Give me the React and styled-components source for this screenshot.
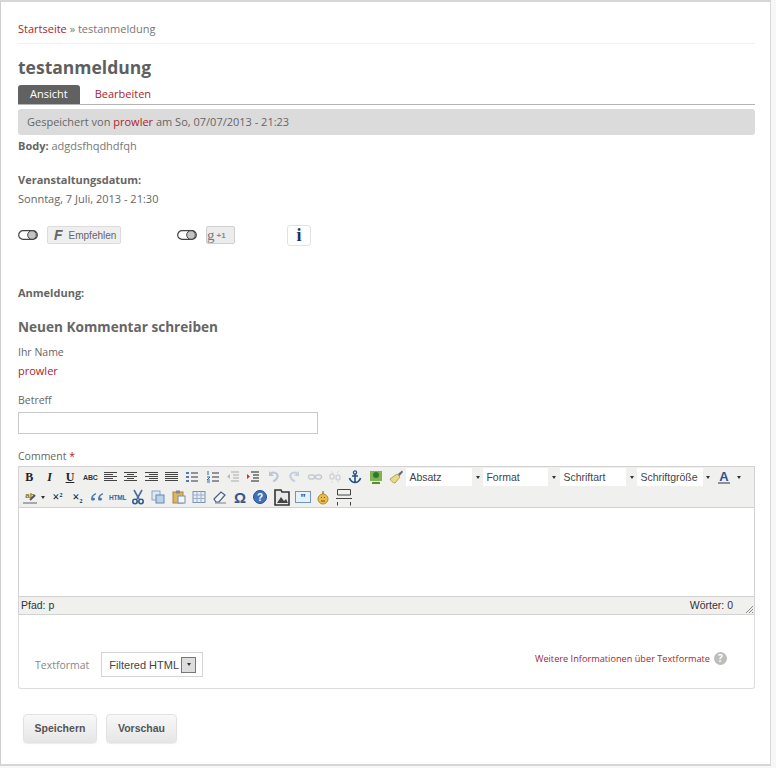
import styled, { createGlobalStyle } from 'styled-components'

const GlobalStyle = createGlobalStyle`
    html, body {
        margin: 0;
        padding: 0;
        background: #f7f7f7;
    }
    body {
        font-family: "Open Sans", "Liberation Sans", sans-serif;
        font-size: 11px;
        color: #666;
    }
`

const Panel = styled.div`
    box-sizing: border-box;
    width: 771px;
    height: 766px;
    padding: 0 15px 0 17px;
    background: #fff;
    border-top: 2px solid #d6d6d6;
    border-left: 1px solid #d0d0d0;
    border-right: 1px solid #d8d8d8;
    border-bottom: 2px solid #d6d6d6;
    overflow: hidden;
`

const Breadcrumb = styled.div`
    height: 42px;
    box-sizing: border-box;
    padding-top: 19px;
    line-height: 16px;
    border-bottom: 1px solid #f1f1f1;
    color: #777;
`

const Link = styled.a`
    color: #a8252f;
    text-decoration: none;
`

const Title = styled.h1`
    margin: 11px 0 0;
    font-size: 17.5px;
    line-height: 24px;
    font-weight: 700;
    color: #5f5f5f;
`

const Tabs = styled.div`
    display: flex;
    height: 19px;
    margin-top: 6px;
    border-bottom: 1px solid #b5b5b5;
`

const Tab = styled.div`
    box-sizing: border-box;
    height: 19px;
    padding: 0 ${(props) => (props.$active ? '12px' : '15px')};
    line-height: 18px;
    border-radius: 3px 3px 0 0;
    color: ${(props) => (props.$active ? '#fff' : '#a8252f')};
    background: ${(props) => (props.$active ? '#616161' : 'transparent')};
`

const Submitted = styled.div`
    height: 26px;
    margin-top: 4px;
    padding-left: 9px;
    line-height: 26px;
    background: #dcdbdb;
    border-radius: 3px;
    color: #666;
`

const BodyLine = styled.div`
    margin-top: 1px;
    line-height: 20px;
    color: #777;
`

const Strong = styled.strong`
    color: #666;
    font-weight: 700;
`

const FieldLabel = styled.div`
    margin-top: ${(props) => props.$top || 0}px;
    line-height: 18px;
    font-weight: ${(props) => (props.$bold ? 700 : 400)};
    font-size: ${(props) => props.$size || 11}px;
    color: #666;
`

const Share = styled.div`
    display: flex;
    align-items: center;
    height: 22px;
    margin-top: 16px;
`

const Toggle = styled.svg`
    flex: none;
    width: 20px;
    height: 10px;
`

const FbButton = styled.div`
    display: flex;
    align-items: center;
    box-sizing: border-box;
    width: 74px;
    height: 18px;
    margin: 0 56px 0 9px;
    padding-left: 6px;
    gap: 6px;
    background: #efefef;
    border: 1px solid #dcdcdc;
    border-radius: 2px;
    font-family: "Liberation Sans", sans-serif;
    font-size: 10px;
    color: #666;
`

const FbLetter = styled.span`
    font-size: 14px;
    font-weight: 700;
    font-style: italic;
    color: #666;
`

const PlusButton = styled.div`
    display: flex;
    align-items: center;
    box-sizing: border-box;
    width: 29px;
    height: 18px;
    margin: 0 52px 0 9px;
    gap: 2px;
    background: #ececec;
    border: 1px solid #cfcfcf;
    border-radius: 2px;
    font-family: "Liberation Sans", sans-serif;
    font-size: 8px;
    font-weight: 700;
    color: #888;
`

const PlusLetter = styled.span`
    font-family: "Liberation Serif", serif;
    font-size: 15px;
    font-weight: 400;
    color: #777;
`

const InfoButton = styled.div`
    box-sizing: border-box;
    width: 24px;
    height: 21px;
    border: 1px solid #e2e2e2;
    border-radius: 3px;
    text-align: center;
    line-height: 19px;
    font-family: "Liberation Serif", serif;
    font-size: 18px;
    font-weight: 700;
    color: #1c2f66;
`

const TextInput = styled.div`
    box-sizing: border-box;
    width: 300px;
    height: 22px;
    margin-top: 3px;
    border: 1px solid #c9c9c9;
`

const Required = styled.span`
    color: #b3202c;
`

const Editor = styled.div`
    box-sizing: border-box;
    width: 737px;
    margin-top: 1px;
    border: 1px solid #d2d2d2;
    background: #f0f0ee;
    font-family: "Liberation Sans", sans-serif;
`

const ToolRow = styled.div`
    display: flex;
    align-items: center;
    height: 20px;
    padding-left: ${(props) => props.$pad || 0}px;
`

const Tool = styled.div`
    flex: none;
    display: flex;
    align-items: center;
    justify-content: center;
    width: ${(props) => props.$w || 20.4}px;
    height: 20px;
    font-weight: 700;
    color: #222;
`

const Letter = styled.span`
    font-family: "Liberation Serif", serif;
    font-size: 12px;
    font-style: ${(props) => (props.$italic ? 'italic' : 'normal')};
    text-decoration: ${(props) => (props.$under ? 'underline' : 'none')};
`

const Power = styled.span`
    font-size: 6px;
    position: relative;
    top: ${(props) => props.$top}px;
`

const Mini = styled.span`
    font-size: ${(props) => props.$size || 7}px;
    letter-spacing: -0.2px;
    color: ${(props) => props.$color || '#333'};
`

const ToolSelect = styled.div`
    flex: none;
    box-sizing: border-box;
    width: ${(props) => props.$w}px;
    height: 18px;
    padding-left: 3px;
    line-height: 18px;
    background: #fff;
    font-size: 10.5px;
    font-weight: 400;
    color: #444;
`

const ToolArrow = styled.div`
    flex: none;
    display: flex;
    align-items: center;
    justify-content: center;
    width: ${(props) => props.$w || 10}px;
    height: 18px;
`

const Caret = styled.span`
    width: 0;
    height: 0;
    border-left: 2.5px solid transparent;
    border-right: 2.5px solid transparent;
    border-top: 3px solid #333;
`

const EditArea = styled.div`
    height: 88px;
    background: #fff;
    border-top: 1px solid #d2d2d2;
    border-bottom: 1px solid #d2d2d2;
`

const StatusBar = styled.div`
    position: relative;
    display: flex;
    justify-content: space-between;
    height: 17px;
    padding: 0 21px 0 2px;
    line-height: 17px;
    font-size: 10.5px;
    color: #333;
`

const Grip = styled.svg`
    position: absolute;
    right: 0;
    bottom: 0;
    width: 10px;
    height: 10px;
`

const FormatBox = styled.div`
    box-sizing: border-box;
    display: flex;
    justify-content: space-between;
    width: 737px;
    height: 74px;
    padding: 37px 27px 0 16px;
    border: 1px solid #ddd;
    border-top: none;
    border-radius: 0 0 3px 3px;
`

const FormatLeft = styled.div`
    display: flex;
    align-items: center;
    height: 25px;
    gap: 12px;
    font-size: 10.5px;
    color: #888;
`

const FormatSelect = styled.div`
    box-sizing: border-box;
    display: flex;
    align-items: center;
    justify-content: space-between;
    width: 102px;
    height: 25px;
    padding: 0 0 0 7px;
    border: 1px solid #d4d4d4;
    font-family: "Liberation Sans", sans-serif;
    font-size: 11px;
    white-space: nowrap;
    color: #444;
`

const SelectButton = styled.span`
    display: flex;
    align-items: center;
    justify-content: center;
    box-sizing: border-box;
    width: 15px;
    height: 16px;
    margin-right: 6px;
    background: #ddd;
    border: 1px solid #777;
`

const FormatHelp = styled.div`
    display: flex;
    align-items: center;
    height: 14px;
    margin-top: -1px;
    gap: 4px;
    font-size: 9.2px;
`

const HelpDot = styled.span`
    width: 13px;
    height: 13px;
    border-radius: 50%;
    background: #bdbdbd;
    color: #fff;
    text-align: center;
    line-height: 13px;
    font-size: 10px;
    font-weight: 700;
`

const Actions = styled.div`
    display: flex;
    gap: 9px;
    margin: 25px 0 0 5px;
`

const Action = styled.div`
    box-sizing: border-box;
    width: ${(props) => props.$w}px;
    height: 29px;
    line-height: 27px;
    text-align: center;
    border: 1px solid #e2e2e2;
    border-radius: 4px;
    background: linear-gradient(#f8f8f8, #e6e6e6);
    box-shadow: 0 1px 1px rgba(0, 0, 0, 0.08);
    font-family: "Liberation Sans", sans-serif;
    font-size: 10.5px;
    font-weight: 700;
    color: #555;
`

const Svg = ({ children, w = 16, h = 16 }) => (
    <svg width={w} height={h} viewBox={`0 0 ${w} ${h}`} fill="none">
        {children}
    </svg>
)

const lines = (rows, color = '#333') =>
    rows.map(([x1, x2], i) => (
        <path key={i} d={`M${x1} ${3.5 + i * 2}H${x2}`} stroke={color} />
    ))

const alignIcon = (rows) => <Svg>{lines(rows, '#444')}</Svg>

const listIcon = (dots, color = '#334') => (
    <Svg>
        {dots}
        <path d="M7 4H14M7 8H14M7 12H14" stroke={color} />
    </Svg>
)

const ToggleIcon = () => (
    <Toggle viewBox="0 0 20 10">
        <rect x="0.7" y="0.7" width="18.6" height="8.6" rx="4.3" fill="#fff" stroke="#444" strokeWidth="1.2" />
        <circle cx="14" cy="5" r="4.3" fill="#c4c4c4" stroke="#444" />
    </Toggle>
)

const firstRow = [
    <Letter key="b">B</Letter>,
    <Letter key="i" $italic>I</Letter>,
    <Letter key="u" $under>U</Letter>,
    <Mini key="abc">ABC</Mini>,
    alignIcon([[1, 14], [1, 10], [1, 14], [1, 10], [1, 14]]),
    alignIcon([[1, 14], [4, 11], [1, 14], [4, 11], [1, 14]]),
    alignIcon([[1, 14], [5, 14], [1, 14], [5, 14], [1, 14]]),
    alignIcon([[1, 14], [1, 14], [1, 14], [1, 14], [1, 14]]),
    listIcon(<path d="M2 3h3v2H2zM2 7h3v2H2zM2 11h3v2H2z" fill="#57a" />),
    listIcon(<path d="M3 2v4M2 8h3l-3 3h3M2 13h3" stroke="#36a" />),
    <Svg key="out">
        <path d="M6 3H14M8 6H14M8 9H14M6 12H14" stroke="#aaa" />
        <path d="M5 5L2 7.5L5 10Z" fill="#bbb" />
    </Svg>,
    <Svg key="ind">
        <path d="M6 3H14M8 6H14M8 9H14M6 12H14" stroke="#222" />
        <path d="M2 5L5 7.5L2 10Z" fill="#c33" />
    </Svg>,
    <Svg key="undo">
        <path d="M5 4C10 2 13 6 11 9C10 11 8 12 7 12" stroke="#b9c6da" strokeWidth="2" />
        <path d="M3 2V7H8Z" fill="#b9c6da" />
    </Svg>,
    <Svg key="redo">
        <path d="M11 4C6 2 3 6 5 9C6 11 8 12 9 12" stroke="#c3cede" strokeWidth="2" />
        <path d="M13 2V7H8Z" fill="#c3cede" />
    </Svg>,
    <Svg key="link">
        <rect x="1.5" y="6" width="6" height="4" rx="2" stroke="#c4c8d0" strokeWidth="1.4" />
        <rect x="8.5" y="6" width="6" height="4" rx="2" stroke="#c4c8d0" strokeWidth="1.4" />
    </Svg>,
    <Svg key="unlink">
        <rect x="3" y="5" width="4" height="5" rx="2" stroke="#cfd2d6" strokeWidth="1.4" />
        <rect x="9" y="6" width="4" height="5" rx="2" stroke="#cfd2d6" strokeWidth="1.4" />
        <path d="M4 2L6 4M12 2L10 4M4 14L6 12M12 14L10 12" stroke="#d8d8d8" />
    </Svg>,
    <Svg key="anchor">
        <circle cx="8" cy="3.5" r="1.6" stroke="#24527f" strokeWidth="1.3" />
        <path d="M8 5V13M5 7H11M2.5 9C3 12 6 13.5 8 13.5C10 13.5 13 12 13.5 9" stroke="#24527f" strokeWidth="1.6" />
    </Svg>,
    <Svg key="image">
        <rect x="2" y="2" width="12" height="10" fill="#7fb352" />
        <circle cx="8" cy="6" r="3" fill="#2f7a2f" />
        <path d="M4 14H12" stroke="#5a8a3a" strokeWidth="2" />
    </Svg>,
    <Svg key="clean">
        <path d="M2 10L9 5L12 8L7 14C5 14 3 12 2 10Z" fill="#e8d98a" stroke="#b5a455" />
        <path d="M10 5L14 1.5L15 3L11.5 7Z" fill="#667" />
    </Svg>,
]

const secondRow = [
    <Svg key="quote">
        <path d="M7 4C4 5 2 7 2 10C2 12 6 12 6 10C6 8.5 4 8.5 3.8 9C4 7 5.5 6 7 5.5ZM14 4C11 5 9 7 9 10C9 12 13 12 13 10C13 8.5 11 8.5 10.8 9C11 7 12.5 6 14 5.5Z" fill="#4a78b5" />
    </Svg>,
    <Mini key="html" $size={6.5} $color="#3b62a5">HTML</Mini>,
    <Svg key="cut">
        <path d="M4 1L9 10M12 1L7 10" stroke="#4b6e9e" strokeWidth="1.6" />
        <circle cx="5" cy="12.5" r="2.2" stroke="#35598c" strokeWidth="1.6" />
        <circle cx="11" cy="12.5" r="2.2" stroke="#35598c" strokeWidth="1.6" />
    </Svg>,
    <Svg key="copy">
        <rect x="2" y="2" width="8" height="9" fill="#dfe8f3" stroke="#8aa6c6" />
        <rect x="6" y="6" width="8" height="8" fill="#bcd0e8" stroke="#5f88b8" />
    </Svg>,
    <Svg key="paste">
        <rect x="2" y="3" width="10" height="11" fill="#d9b76a" stroke="#a9843c" />
        <rect x="5" y="1.5" width="4" height="3" fill="#888" />
        <rect x="7" y="7" width="7" height="7" fill="#f2f5fa" stroke="#7a8ea8" />
    </Svg>,
    <Svg key="table">
        <rect x="2" y="2.5" width="12" height="11" fill="#e6edf6" stroke="#7d93ad" />
        <path d="M2 6H14M2 9.5H14M6 2.5V13.5M10 2.5V13.5" stroke="#9db0c6" />
    </Svg>,
    <Svg key="erase">
        <path d="M2 10L9 3L13 6L7 13H4Z" fill="#f4f4f4" stroke="#4a5f80" strokeWidth="1.2" />
        <path d="M3 14H14" stroke="#6d7f99" />
    </Svg>,
    <Mini key="omega" $size={15} $color="#35598c">Ω</Mini>,
    <Svg key="help">
        <circle cx="8" cy="8" r="6.5" fill="#3f72bd" stroke="#24508f" />
        <text x="8" y="11.5" fontSize="10" fontWeight="700" textAnchor="middle" fill="#fff">?</text>
    </Svg>,
]

const App = () => (
    <>
        <GlobalStyle />
        <Panel>
            <Breadcrumb>
                <Link>Startseite</Link> » testanmeldung
            </Breadcrumb>
            <Title>testanmeldung</Title>
            <Tabs>
                <Tab $active>Ansicht</Tab>
                <Tab>Bearbeiten</Tab>
            </Tabs>
            <Submitted>
                Gespeichert von <Link>prowler</Link> am So, 07/07/2013 - 21:23
            </Submitted>
            <BodyLine>
                <Strong>Body:</Strong> adgdsfhqdhdfqh
            </BodyLine>
            <FieldLabel $bold $top={15}>Veranstaltungsdatum:</FieldLabel>
            <FieldLabel $top={1}>Sonntag, 7 Juli, 2013 - 21:30</FieldLabel>
            <Share>
                <ToggleIcon />
                <FbButton>
                    <FbLetter>F</FbLetter>
                    Empfehlen
                </FbButton>
                <ToggleIcon />
                <PlusButton>
                    <PlusLetter>g</PlusLetter>
                    +1
                </PlusButton>
                <InfoButton>i</InfoButton>
            </Share>
            <FieldLabel $bold $top={38}>Anmeldung:</FieldLabel>
            <FieldLabel $bold $size={13.6} $top={16}>Neuen Kommentar schreiben</FieldLabel>
            <FieldLabel $size={10.5} $top={7}>Ihr Name</FieldLabel>
            <FieldLabel $top={1}><Link>prowler</Link></FieldLabel>
            <FieldLabel $size={10.5} $top={11}>Betreff</FieldLabel>
            <TextInput />
            <FieldLabel $size={10.5} $top={13}>
                Comment <Required>*</Required>
            </FieldLabel>
            <Editor>
                <ToolRow>
                    {firstRow.map((item, i) => (
                        <Tool key={i}>{item}</Tool>
                    ))}
                    <ToolSelect $w={66}>Absatz</ToolSelect>
                    <ToolArrow $w={11}><Caret /></ToolArrow>
                    <ToolSelect $w={65}>Format</ToolSelect>
                    <ToolArrow $w={12}><Caret /></ToolArrow>
                    <ToolSelect $w={66}>Schriftart</ToolSelect>
                    <ToolArrow $w={11}><Caret /></ToolArrow>
                    <ToolSelect $w={66}>Schriftgröße</ToolSelect>
                    <ToolArrow $w={10}><Caret /></ToolArrow>
                    <Tool $w={22}>
                        <Svg>
                            <text x="8" y="11.5" fontSize="13" fontWeight="700" textAnchor="middle" fill="#2f4f8f">A</text>
                            <path d="M2 14H14" stroke="#8a8f9a" strokeWidth="2" />
                        </Svg>
                    </Tool>
                    <ToolArrow $w={8}><Caret /></ToolArrow>
                </ToolRow>
                <ToolRow $pad={2}>
                    <Tool $w={18}>
                        <Svg>
                            <text x="8" y="9" fontSize="8" fontWeight="700" textAnchor="middle" fill="#7a7a20">ab</text>
                            <path d="M8 11L13 6" stroke="#556" strokeWidth="2" />
                            <path d="M1 14H15" stroke="#a9a9a9" strokeWidth="2" />
                        </Svg>
                    </Tool>
                    <ToolArrow $w={8}><Caret /></ToolArrow>
                    <Tool $w={21}>
                        <Letter>×<Power $top={-4}>2</Power></Letter>
                    </Tool>
                    <Tool $w={19}>
                        <Letter>×<Power $top={2}>2</Power></Letter>
                    </Tool>
                    {secondRow.map((item, i) => (
                        <Tool key={i}>{item}</Tool>
                    ))}
                    <Tool $w={22}>
                        <Svg w={20} h={20}>
                            <path d="M3 3H9L10 5H17V18H3Z" fill="#e8e8e8" stroke="#333" strokeWidth="1.6" />
                            <path d="M5 16L9 10L12 14L14 12L16 16Z" fill="#444" />
                        </Svg>
                    </Tool>
                    <Tool $w={20}>
                        <Svg w={18} h={16}>
                            <rect x="1.5" y="2.5" width="15" height="11" fill="#e8f0fa" stroke="#6f94c4" />
                            <text x="9" y="13" fontSize="11" fontWeight="700" textAnchor="middle" fill="#274f8a">”</text>
                        </Svg>
                    </Tool>
                    <Tool $w={21}>
                        <Svg>
                            <circle cx="8" cy="10" r="5" fill="#e9bd4c" stroke="#b58a2c" />
                            <path d="M8 5V2M6 8.5h1M9 8.5h1M6 12H10" stroke="#6b5020" />
                        </Svg>
                    </Tool>
                    <Tool $w={21}>
                        <Svg w={16} h={18}>
                            <path d="M1.5 14V17.5M14.5 14V17.5M1.5 7V1.5H14.5V7H1.5ZM0 10.5H16" stroke="#444" />
                        </Svg>
                    </Tool>
                </ToolRow>
                <EditArea />
                <StatusBar>
                    <span>Pfad: p</span>
                    <span>Wörter: 0</span>
                    <Grip viewBox="0 0 10 10">
                        <path d="M9 2L2 9M9 5L5 9M9 8L8 9" stroke="#888" />
                    </Grip>
                </StatusBar>
            </Editor>
            <FormatBox>
                <FormatLeft>
                    Textformat
                    <FormatSelect>
                        Filtered HTML
                        <SelectButton><Caret /></SelectButton>
                    </FormatSelect>
                </FormatLeft>
                <FormatHelp>
                    <Link>Weitere Informationen über Textformate</Link>
                    <HelpDot>?</HelpDot>
                </FormatHelp>
            </FormatBox>
            <Actions>
                <Action $w={74}>Speichern</Action>
                <Action $w={71}>Vorschau</Action>
            </Actions>
        </Panel>
    </>
)

export default App
